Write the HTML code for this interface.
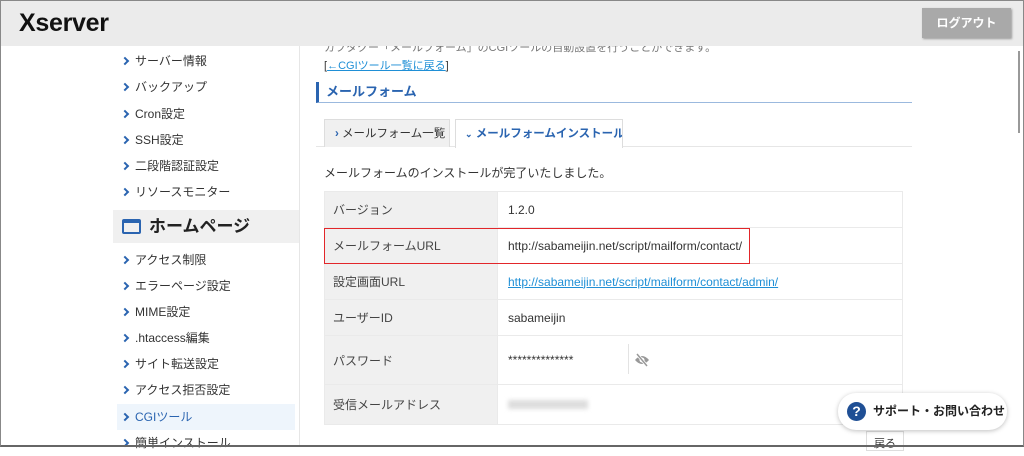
<!DOCTYPE html>
<html><head><meta charset="utf-8"><style>
*{box-sizing:border-box;margin:0;padding:0}
body{width:1024px;height:447px;overflow:hidden;background:#fff;font-family:"Liberation Sans","Noto Sans CJK JP",sans-serif;color:#333;position:relative}
.frame{position:absolute;inset:0;border:1px solid #888;border-bottom:2px solid #666;z-index:50;pointer-events:none}
.hdr{position:absolute;left:0;top:0;width:1024px;height:46px;background:#ebebeb;z-index:5}
.logo{position:absolute;left:19px;top:9px;font-size:25px;font-weight:bold;color:#111;letter-spacing:-0.3px}
.logout{position:absolute;left:922px;top:8px;width:89px;height:30px;background:#a9a9a9;color:#fff;font-size:12px;font-weight:bold;text-align:center;line-height:30px;box-shadow:1px 1px 2px #999}
.side{position:absolute;left:113px;top:46px;width:187px;height:401px;border-right:1px solid #e6e6e6}
.it{position:absolute;left:0;height:26px;font-size:12px;line-height:26px;padding-left:22px;width:187px;white-space:nowrap}
.it:before{content:"";position:absolute;left:9px;top:10px;width:4px;height:4px;border-top:2px solid #2a64b0;border-right:2px solid #2a64b0;transform:rotate(45deg)}
.it.cgi:before{left:5px}
.hp{position:absolute;left:0;top:164px;width:186px;height:33px;background:#f0f0f0;font-size:17px;font-weight:bold;line-height:33px;padding-left:36px;color:#222}
.hp i{position:absolute;left:9px;top:9px;width:19px;height:15px;border:2px solid #2a64b0;border-top-width:4px;border-radius:2px}
a{color:#1f8fd6}
.ttl{position:absolute;left:316px;top:82px;width:596px;height:21px;border-left:3px solid #2a64b0;border-bottom:1px solid #9bb9de;font-size:13px;font-weight:bold;color:#2a64b0;padding-left:7px;line-height:20px}
.tabline{position:absolute;left:316px;top:146px;width:596px;height:1px;background:#e6e6e6}
.tab{position:absolute;top:119px;height:28px;font-size:11.5px;line-height:28px;border:1px solid #ddd;border-bottom:none;white-space:nowrap;overflow:hidden}
table{position:absolute;left:324px;top:191px;width:579px;border-collapse:collapse;font-size:12px}
td{border:1px solid #eaeaea;height:36px;padding-left:8px;white-space:nowrap}
td.l{background:#f0f0f0;width:173px;color:#444}
td.r{padding-left:10px}
.red{position:absolute;left:324px;top:228px;width:426px;height:36px;border:1.5px solid #e2262a}
.sup{position:absolute;left:838px;top:393px;width:169px;height:37px;background:#fff;border-radius:18px;box-shadow:0 1px 5px rgba(0,0,0,.25);font-size:12px;font-weight:bold;line-height:37px;padding-left:35px;color:#222}
.sup i{position:absolute;left:9px;top:9px;width:19px;height:19px;border-radius:50%;background:#1f4f95;color:#fff;font-style:normal;text-align:center;line-height:19px;font-size:14px}
</style></head><body>
<div class="hdr"><div class="logo">Xserver</div><div class="logout">ログアウト</div></div>
<div class="side">
<div class="it" style="top:2px">サーバー情報</div>
<div class="it" style="top:28px">バックアップ</div>
<div class="it" style="top:55px">Cron設定</div>
<div class="it" style="top:81px">SSH設定</div>
<div class="it" style="top:107px">二段階認証設定</div>
<div class="it" style="top:133px">リソースモニター</div>
<div class="hp"><i></i>ホームページ</div>
<div class="it" style="top:201px">アクセス制限</div>
<div class="it" style="top:227px">エラーページ設定</div>
<div class="it" style="top:253px">MIME設定</div>
<div class="it" style="top:279px">.htaccess編集</div>
<div class="it" style="top:305px">サイト転送設定</div>
<div class="it" style="top:331px">アクセス拒否設定</div>
<div class="it cgi" style="top:358px;left:4px;width:178px;background:#eef5fc;color:#2a64b0;padding-left:18px">CGIツール</div>
<div class="it" style="top:384px">簡単インストール</div>
</div>
<div style="position:absolute;left:324px;top:39px;font-size:11px;color:#777;white-space:nowrap">カフタクー「メールフォーム」のCGIツールの自動設置を行うことができます。</div>
<div style="position:absolute;left:324px;top:57px;font-size:11px">[<a href="#">←CGIツール一覧に戻る</a>]</div>
<div class="ttl">メールフォーム</div>
<div class="tabline"></div>
<div class="tab" style="left:324px;width:126px;background:#f0f0f0;padding-left:10px"><span style="color:#2a64b0;font-weight:bold">›</span> メールフォーム一覧</div>
<div class="tab" style="left:455px;width:168px;height:29px;background:#fff;padding-left:9px;color:#2a64b0;font-weight:bold"><span style="font-size:9px">⌄</span> メールフォームインストール</div>
<div style="position:absolute;left:324px;top:164px;font-size:12px">メールフォームのインストールが完了いたしました。</div>
<table>
<tr><td class="l">バージョン</td><td class="r">1.2.0</td></tr>
<tr><td class="l">メールフォームURL</td><td class="r">http://sabameijin.net/script/mailform/contact/</td></tr>
<tr><td class="l">設定画面URL</td><td class="r"><a href="#">http://sabameijin.net/script/mailform/contact/admin/</a></td></tr>
<tr><td class="l">ユーザーID</td><td class="r">sabameijin</td></tr>
<tr><td class="l" style="height:49px">パスワード</td><td class="r" style="position:relative">**************<span style="position:absolute;left:130px;top:8px;width:1px;height:30px;background:#e3e3e3"></span><svg style="position:absolute;left:136px;top:17px" width="16" height="14" viewBox="0 0 16 14"><path d="M1 7Q8 -1 15 7Q8 15 1 7Z" fill="#999"/><circle cx="8" cy="7" r="2.5" fill="#fff"/><path d="M3 1L13 13" stroke="#fff" stroke-width="3"/><path d="M3 1L13 13" stroke="#999" stroke-width="1.5"/></svg></td></tr>
<tr><td class="l" style="height:40px">受信メールアドレス</td><td class="r"><span style="display:inline-block;width:80px;height:9px;background:#ddd;filter:blur(2px)"></span></td></tr>
</table>
<div class="red"></div>
<div style="position:absolute;left:866px;top:431px;width:38px;height:20px;border:1px solid #ddd;font-size:11px;padding:3px 0 0 7px;background:#fff">戻る</div>
<div class="sup"><i>?</i>サポート・お問い合わせ</div>
<div style="position:absolute;left:1018px;top:51px;width:2px;height:82px;background:#999"></div>
<div class="frame"></div>
</body></html>
